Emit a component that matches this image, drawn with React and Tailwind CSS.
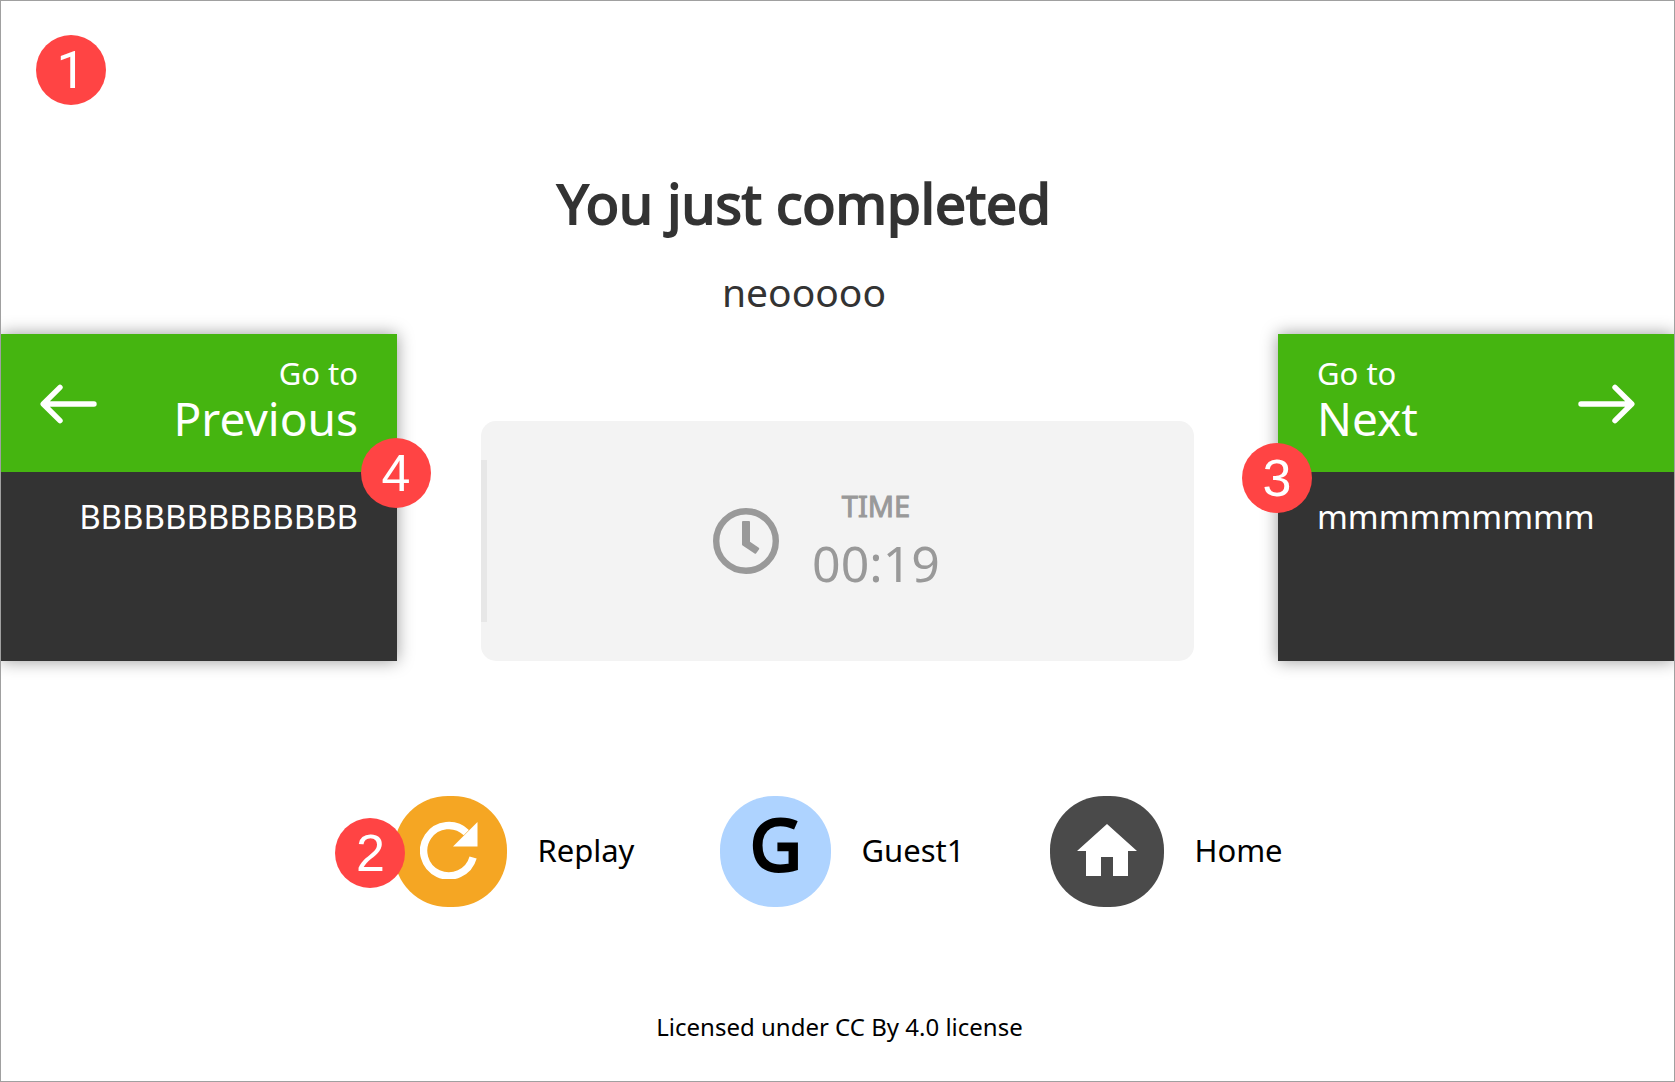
function Badge({ n, className }) {
  return (
    <span
      className={`absolute z-10 flex size-[70px] items-center justify-center rounded-full bg-[#ff4444] text-[52px] leading-none text-white ${className}`}
    >
      {n}
    </span>
  );
}

function Arrow({ flip }) {
  return (
    <svg
      viewBox="0 0 57 40"
      className={`h-10 w-[57px] shrink-0 ${flip ? "-scale-x-100" : ""}`}
      fill="none"
      stroke="currentColor"
      strokeWidth="5.4"
      strokeLinecap="round"
      strokeLinejoin="round"
      aria-hidden="true"
    >
      <path d="M54 20H4M20 3.3L3.2 20L20 36.7" />
    </svg>
  );
}

function NavCard({ target, title, previous, badge, badgeClass }) {
  return (
    <div className="relative w-[396px] shrink-0">
      <a
        href={previous ? "#previous" : "#next"}
        className="block text-white shadow-[0_0_16px_rgba(0,0,0,0.4)]"
      >
        <div
          className={`flex h-[138px] items-center justify-between bg-[#45b510] px-[39px] pt-0.5 ${previous ? "text-right" : "flex-row-reverse text-left"}`}
        >
          <Arrow flip={!previous} />
          <div className="pb-2">
            <div className="text-[31px] leading-9">Go to</div>
            <div className="text-[46px] leading-[54px]">{target}</div>
          </div>
        </div>
        <div
          className={`h-[189px] bg-[#333333] px-[39px] pt-[23px] text-[33px] leading-[44px] ${previous ? "text-right" : "text-left"}`}
        >
          {title}
        </div>
      </a>
      <Badge n={badge} className={badgeClass} />
    </div>
  );
}

function Action({ label, iconClass, children, badge }) {
  return (
    <button type="button" className="relative flex items-center gap-[30px] text-[31px] leading-10 text-black">
      <span className={`flex h-[111px] items-center justify-center rounded-[54px] ${iconClass}`}>{children}</span>
      <span className="pb-1">{label}</span>
      {badge}
    </button>
  );
}

export default function App() {
  return (
    <main className="relative flex min-h-screen flex-col overflow-hidden border border-[#a0a0a0] bg-white font-['Noto_Sans',sans-serif]">
      <Badge n={1} className="top-[34px] left-[35px] pt-0.5 font-['Roboto',sans-serif]" />

      <header className="pt-[164px] pr-[67px] text-center text-[#333333]">
        <h1 className="text-[55px] leading-[76px] font-normal [-webkit-text-stroke:2px_#333333]">
          You just completed
        </h1>
        <p className="mt-6 text-[39px] leading-[54px]">neooooo</p>
      </header>

      <section className="mt-[15px] flex items-end justify-between">
        <NavCard
          previous
          target="Previous"
          title="BBBBBBBBBBBBB"
          badge={4}
          badgeClass="top-[104px] -right-[34px] font-['Liberation_Sans',sans-serif]"
        />
        <div className="mx-[84px] flex h-60 flex-1 items-center overflow-hidden rounded-[15px] bg-[#f3f3f3] text-[#999999]">
          <div className="h-[162px] w-1.5 bg-[#e7e7e7]" />
          <div className="flex flex-1 items-center justify-center gap-[33px] pr-7">
            <svg viewBox="0 0 66 66" className="size-[66px]" aria-hidden="true">
              <circle cx="33" cy="33" r="29.8" fill="none" stroke="currentColor" strokeWidth="6.4" />
              <path
                d="M29 14Q29 13 30 13H36Q37 13 37 14V33.7L45.8 39.8Q46.6 40.4 46.1 41.2L43.2 45.3Q42.5 46.2 41.6 45.6L29.6 37.6Q29 37.2 29 36.5Z"
                fill="currentColor"
              />
            </svg>
            <div className="text-center">
              <div className="text-[29px] leading-10 [-webkit-text-stroke:1px_#999999]">TIME</div>
              <div className="mt-1 text-[50px] leading-[66px]">00:19</div>
            </div>
          </div>
        </div>
        <NavCard
          target="Next"
          title="mmmmmmmmm"
          badge={3}
          badgeClass="top-[109px] -left-[36px] font-['Liberation_Sans',sans-serif]"
        />
      </section>

      <nav className="mt-[135px] flex justify-center gap-[86px] pl-0.5">
        <Action
          label="Replay"
          iconClass="w-[113px] bg-[#f5a623] pb-1"
          badge={<Badge n={2} className="top-[22px] -left-[59px] font-['Liberation_Sans',sans-serif]" />}
        >
          <svg viewBox="0 0 58 58" className="mr-1 size-[58px]" aria-hidden="true">
            <path d="M53.1 36.5A25.2 25.2 0 1 1 46.3 11.6" fill="none" stroke="#fff" strokeWidth="7.4" />
            <path d="M57.5 1V25.5H33Z" fill="#fff" />
          </svg>
        </Action>
        <Action label="Guest1" iconClass="w-[111px] bg-[#aed3ff] pb-4 text-[71px] [-webkit-text-stroke:3px_#000000]">
          G
        </Action>
        <Action label="Home" iconClass="w-[114px] bg-[#4a4a4a] pb-1">
          <svg viewBox="0 0 60 52" className="h-[52px] w-[60px]" fill="#fff" aria-hidden="true">
            <path d="M30 0L60 27H51V52H36V33H24V52H9V27H0Z" />
          </svg>
        </Action>
      </nav>

      <footer className="mt-[102px] pl-1 text-center text-[24px] leading-9 text-black">
        Licensed under CC By 4.0 license
      </footer>
    </main>
  );
}
